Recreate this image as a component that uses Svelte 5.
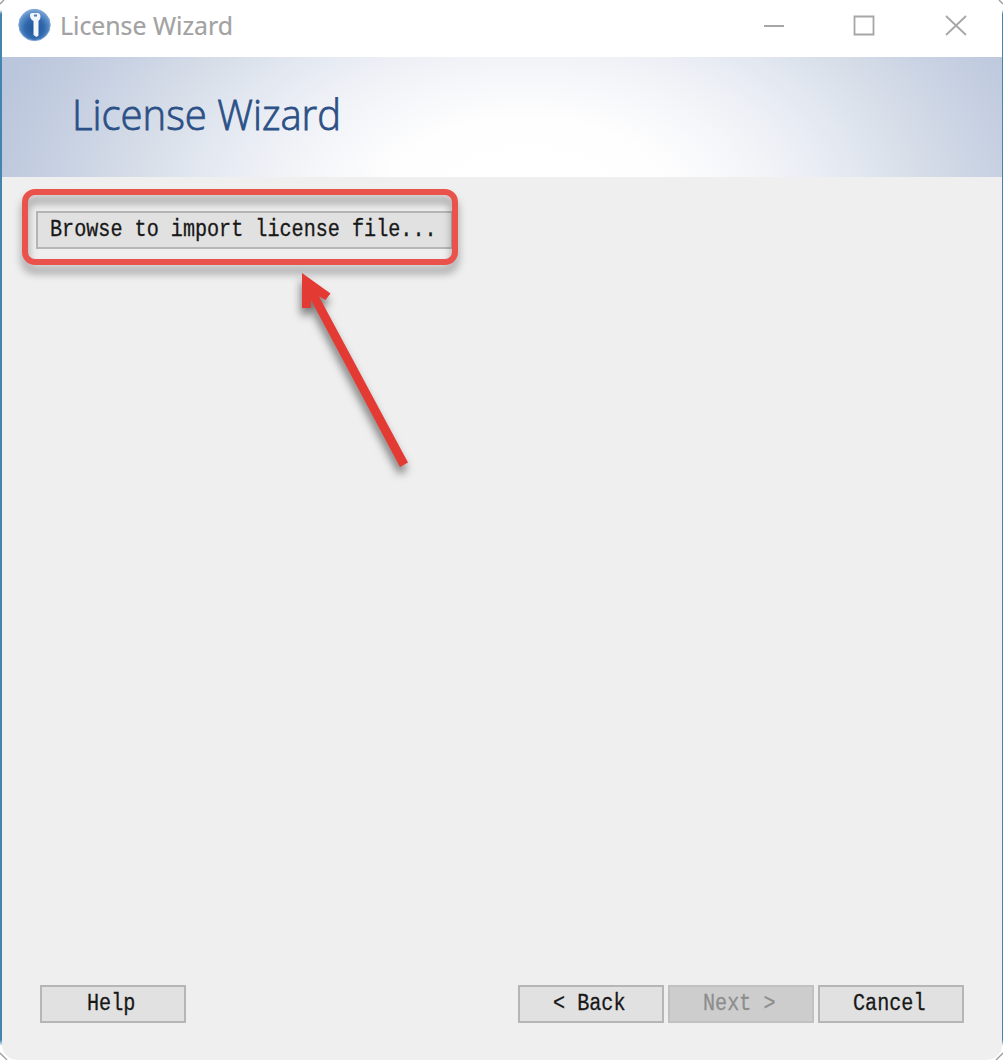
<script lang="ts">
  const navigation = [
    { label: '< Back', disabled: false },
    { label: 'Next >', disabled: true },
    { label: 'Cancel', disabled: false },
  ];
</script>

{#snippet label(text: string)}
  <svg class="label" width={text.length * 12.08} height="30">
    <text x="0" y="21" textLength={text.length * 12.08} lengthAdjust="spacingAndGlyphs">{text}</text>
  </svg>
{/snippet}

<div class="backdrop">
  <main class="window">
    <header class="titlebar">
      <svg class="app-icon" width="34" height="34" viewBox="0 0 34 34">
        <defs>
          <radialGradient id="orb" cx=".5" cy=".6" r=".6">
            <stop offset="0" stop-color="#1f5496" />
            <stop offset=".5" stop-color="#3168ad" />
            <stop offset=".8" stop-color="#5a8cc8" />
            <stop offset="1" stop-color="#86acd9" />
          </radialGradient>
        </defs>
        <circle cx="16.5" cy="17" r="15.7" fill="url(#orb)" stroke="#7ba5d6" />
        <path fill-rule="evenodd" d="M12 7 Q12 5 14 5 H20 Q22.5 5.5 22.5 8.5 Q22.5 12 20.5 13 V27.5 L18.5 29 L15.5 27 V13 Q12 11.5 12 7Z M16 6.5V8.5H19V6.5Z" fill="#f2f6fb" />
      </svg>
      <svg class="caption" width="180" height="40">
        <text x="0" y="27" textLength="173" lengthAdjust="spacingAndGlyphs">License Wizard</text>
      </svg>
      <svg class="controls" width="202" height="22" viewBox="0 0 202 22">
        <path d="M0 12H20M90.5 2.5H109.5V20.5H90.5ZM182 2L202 21M202 2L182 21" />
      </svg>
    </header>
    <section class="banner">
      <svg class="heading" width="280" height="60">
        <text x="0" y="42.5" textLength="269" lengthAdjust="spacingAndGlyphs">License Wizard</text>
      </svg>
    </section>
    <section class="content">
      <button class="browse">{@render label('Browse to import license file...')}</button>
    </section>
    <footer>
      <button>{@render label('Help')}</button>
      <div class="navigation">
        {#each navigation as item}
          <button disabled={item.disabled}>{@render label(item.label)}</button>
        {/each}
      </div>
    </footer>
  </main>
  <svg class="outline" width="1003" height="1060" viewBox="0 0 1003 1060">
    <path d="M0 4 L4 0 M999 0 L1003 4 M0 1053 L7 1060 M996 1060 L1003 1053" />
  </svg>
  <div class="highlight"></div>
  <svg class="arrow" width="150" height="220" viewBox="0 0 150 220">
    <path d="M22 13 L50.5 33.5 L45.5 40 L39 36.5 L128 202.5 L120 207 L31 40 V48 H22Z" />
  </svg>
</div>

<style>
  :global(body) {
    margin: 0;
    background: #fff;
  }
  .backdrop {
    position: relative;
    width: 1003px;
    height: 1060px;
    overflow: hidden;
    background: linear-gradient(#fff 10px, #4684b0 14px, #4684b0 1040px, #fff 1046px);
  }
  .outline {
    position: absolute;
    inset: 0;
    fill: none;
    stroke: #999;
    stroke-width: 1.3;
  }
  .window {
    height: 1060px;
    margin: 0 1px 0 2px;
    background: #efefef;
    display: flex;
    flex-direction: column;
    overflow: hidden;
    border-radius: 0 0 15px 15px;
  }
  .titlebar {
    height: 57px;
    flex: none;
    box-sizing: border-box;
    padding: 8px 36px 0 16px;
    display: flex;
    align-items: flex-start;
    background: #fff;
  }
  .app-icon {
    flex: none;
  }
  .caption {
    margin-left: 8px;
    overflow: visible;
    fill: #a2a2a2;
    stroke: #a2a2a2;
    stroke-width: .2;
    font: 24.5px "Noto Sans", sans-serif;
  }
  .controls {
    margin: 6px 0 0 auto;
    fill: none;
    stroke: #a6a6a6;
    stroke-width: 1.8;
    overflow: visible;
  }
  .banner {
    height: 120px;
    flex: none;
    box-sizing: border-box;
    padding: 30px 0 0 70px;
    background: radial-gradient(ellipse 560px 340px at 525px 150px, #fff 0%, #fefefe 26%, #f6f7fa 38%, #eceff5 50%, #e3e8f1 59%, #d8dfe9 69%, #cbd4e4 81%, #c1cbdf 92%, #bac6dc 100%);
  }
  .heading {
    display: block;
    overflow: visible;
    fill: #2b5086;
    font: 300 42px "Open Sans", sans-serif;
    stroke: #2b5086;
    stroke-width: .8;
  }
  .content {
    flex: 1;
    padding: 34px 34px 0;
  }
  button {
    box-sizing: border-box;
    width: 146px;
    height: 38px;
    padding: 0 4px 0 0;
    border: 2px solid #b6b6b6;
    border-radius: 0;
    background: #e1e1e1;
    color: #181818;
    display: flex;
    align-items: center;
    justify-content: center;
  }
  button:disabled {
    background: #cdcdcd;
    border-color: #c1c1c1;
    color: #8d8d8d;
  }
  .browse {
    width: 417px;
    justify-content: flex-start;
    padding-left: 12px;
  }
  .label {
    display: block;
    overflow: visible;
    fill: currentColor;
    stroke: currentColor;
    stroke-width: .3;
    font: 23.5px "Liberation Mono", monospace;
    white-space: pre;
  }
  footer {
    display: flex;
    justify-content: space-between;
    padding: 0 38px 37px 38px;
  }
  .navigation {
    display: flex;
    gap: 4px;
  }
  .highlight {
    position: absolute;
    left: 22px;
    top: 189px;
    width: 436px;
    height: 76px;
    box-sizing: border-box;
    border: 6px solid #e9534c;
    border-radius: 13px;
    filter: drop-shadow(0 8px 4px rgba(0, 0, 0, .38));
  }
  .arrow {
    position: absolute;
    left: 280px;
    top: 260px;
    overflow: visible;
    fill: #e33b34;
    filter: drop-shadow(-1px 7px 4px rgba(0, 0, 0, .5));
  }
</style>
